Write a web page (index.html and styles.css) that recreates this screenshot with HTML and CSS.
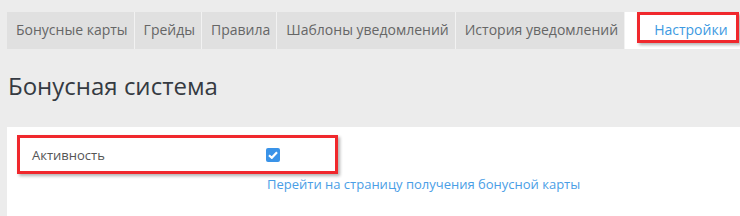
FILE: index.html
```html
<!DOCTYPE html>
<html lang="ru">
<head>
<meta charset="UTF-8">
<title>Бонусная система</title>
<link rel="stylesheet" href="styles.css">
</head>
<body>
<ul class="tabs">
  <li class="tab">Бонусные карты</li>
  <li class="tab">Грейды</li>
  <li class="tab">Правила</li>
  <li class="tab">Шаблоны уведомлений</li>
  <li class="tab">История уведомлений</li>
  <li class="tab active">Настройки<span class="mark"></span></li>
</ul>

<h1 class="title">Бонусная система</h1>

<div class="panel">
  <div class="form-row">
    <label class="form-label">Активность</label>
    <span class="check">
      <svg width="10" height="8" viewBox="0 0 10 8"><path d="M1 4.2 L3.8 6.8 L9 1.3" fill="none" stroke="#fff" stroke-width="2.2"/></svg>
    </span>
  </div>
  <a class="link" href="#">Перейти на страницу получения бонусной карты</a>
</div>
</body>
</html>
```

FILE: styles.css
```css
body {
  margin: 0;
  padding-left: 7px;
  background: #ececec;
  font-family: "Open Sans", "Noto Sans", sans-serif;
  overflow: hidden;
}
.tabs {
  display: flex;
  list-style: none;
  margin: 12px 0 0;
  padding: 0;
}
.tab {
  background: #e0e0e0;
  color: #666;
  font-size: 14px;
  line-height: 35px;
  padding: 0 6px 2px 9px;
  border-right: 1px solid #f2f2f2;
  white-space: nowrap;
}
.tab.active {
  position: relative;
  flex: 1;
  background: #fff;
  color: #3d9ae2;
  padding-left: 29px;
  border-right: none;
}
.mark {
  position: absolute;
  left: 12px;
  top: 0;
  right: 1px;
  height: 31px;
  border: 3px solid #f0282d;
  box-sizing: border-box;
  box-shadow: 2px 2px 3px rgba(0,0,0,0.3);
}
.title {
  margin: 22px 0 27px 1px;
  font-size: 24px;
  font-weight: normal;
  line-height: 29px;
  color: #353a42;
}
.panel {
  background: #fff;
  padding: 8px 10px 30px;
  height: 60px;
}
.form-row {
  display: flex;
  align-items: center;
  width: 321px;
  padding: 7px 0 6px 12px;
  border: 3px solid #f0282d;
  box-shadow: 2px 2px 3px rgba(0,0,0,0.3);
  box-sizing: border-box;
  font-size: 13px;
  line-height: 20px;
}
.form-label {
  width: 234px;
  color: #555;
}
.check {
  display: flex;
  align-items: center;
  justify-content: center;
  width: 14px;
  height: 14px;
  border-radius: 2px;
  background: #3a93e8;
}
.link {
  display: block;
  margin: 0 0 0 250px;
  font-size: 13px;
  line-height: 20px;
  color: #4a9ee6;
  text-decoration: none;
}
```
